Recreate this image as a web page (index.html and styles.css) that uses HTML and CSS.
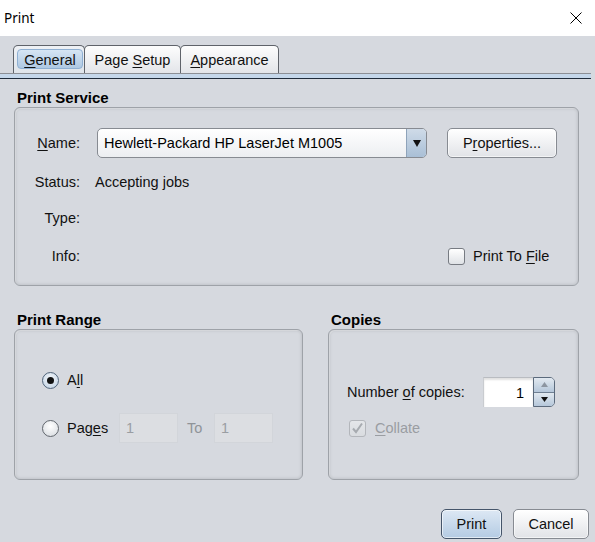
FILE: index.html
```html
<!DOCTYPE html>
<html>
<head>
<meta charset="utf-8">
<title>Print</title>
<link rel="stylesheet" href="styles.css">
</head>
<body>
<header class="titlebar">
  <span class="title">Print</span>
  <svg class="close" width="12" height="12" viewBox="0 0 12 12"><path d="M0.5 0.5L11.5 11.5M11.5 0.5L0.5 11.5" stroke="#000" stroke-width="1" fill="none"/></svg>
</header>
<main class="content">
  <nav class="tabs">
    <div class="tab tab-general selected"><span class="tab-inner"><span><u>G</u>eneral</span></span></div>
    <div class="tab tab-setup"><span>Page <u>S</u>etup</span></div>
    <div class="tab tab-appearance"><span><u>A</u>ppearance</span></div>
  </nav>
  <div class="tabline"></div>

  <section class="group service">
    <h2 class="group-title">Print Service</h2>
    <div class="panel service-panel">
      <div class="row row-name">
        <span class="label"><u>N</u>ame:</span>
        <div class="combo">
          <span class="combo-text">Hewlett-Packard HP LaserJet M1005</span>
          <span class="combo-arrow"><svg width="8" height="7" viewBox="0 0 8 7"><path d="M0 0H8L4 7Z" fill="#111"/></svg></span>
        </div>
        <div class="btn props"><span>P<u>r</u>operties...</span></div>
      </div>
      <div class="row row-status">
        <span class="label">Status:</span>
        <span class="value">Accepting jobs</span>
      </div>
      <div class="row row-type">
        <span class="label">Type:</span>
      </div>
      <div class="row row-info">
        <span class="label">Info:</span>
        <label class="check-group tofile"><span class="checkbox"></span><span>Print To <u>F</u>ile</span></label>
      </div>
    </div>
  </section>

  <div class="row2">
    <section class="group range">
      <h2 class="group-title">Print Range</h2>
      <div class="panel range-panel">
        <div class="radio-row row-all">
          <span class="radio checked"></span><span class="radio-label">A<u>l</u>l</span>
        </div>
        <div class="radio-row row-pages">
          <span class="radio"></span><span class="radio-label pages-label">Pag<u>e</u>s</span>
          <span class="field disabled">1</span>
          <span class="to">To</span>
          <span class="field disabled">1</span>
        </div>
      </div>
    </section>
    <section class="group copies">
      <h2 class="group-title">Copies</h2>
      <div class="panel copies-panel">
        <div class="copies-row">
          <span class="copies-label">Number <u>o</u>f copies:</span>
          <div class="spinner">
            <span class="spin-field">1</span>
            <span class="spin-buttons">
              <span class="spin-btn up"><svg width="7" height="5" viewBox="0 0 7 5"><path d="M0 5H7L3.5 0Z" fill="#8d96a1"/></svg></span>
              <span class="spin-btn down"><svg width="7" height="5" viewBox="0 0 7 5"><path d="M0 0H7L3.5 5Z" fill="#111"/></svg></span>
            </span>
          </div>
        </div>
        <label class="check-group collate">
          <span class="checkbox disabled"><svg width="15" height="15" viewBox="0 0 15 15"><path d="M3 7.5L6 11L12 2.5" stroke="#a7abb0" stroke-width="2" fill="none"/></svg></span>
          <span class="disabled-text"><u>C</u>ollate</span>
        </label>
      </div>
    </section>
  </div>

  <div class="buttons">
    <div class="btn default"><span>Print</span></div>
    <div class="btn cancel"><span>Cancel</span></div>
  </div>
</main>
</body>
</html>
```

FILE: styles.css
```css
* { box-sizing: border-box; margin: 0; padding: 0; }

body {
  width: 595px;
  height: 542px;
  overflow: hidden;
  background: #d6d9df;
  font-family: "Liberation Sans", Arial, sans-serif;
  font-size: 14.5px;
  color: #111;
}

u { text-underline-offset: 2px; }

.titlebar {
  height: 36px;
  background: #fff;
  display: flex;
  align-items: center;
  justify-content: space-between;
  padding: 0 13px 0 4px;
}
.title {
  font-family: "Noto Sans", "Open Sans", sans-serif;
  font-size: 13.5px;
  color: #000;
}
.close { display: block; margin-top: -1px; }

.content { padding-top: 9px; }

.tabs {
  display: flex;
  padding-left: 13px;
  height: 28px;
}
.tab {
  height: 28px;
  border: 1px solid #5f636a;
  border-bottom: none;
  border-radius: 5px 5px 0 0;
  background: linear-gradient(#fdfdfd, #e3e5e9);
  display: flex;
  align-items: center;
  justify-content: center;
  line-height: 16px;
  white-space: nowrap;
  padding-top: 1px;
}
.tab + .tab { margin-left: -1px; }
.tab-general { width: 72px; }
.tab-setup { width: 97px; }
.tab-appearance { width: 99px; }
.tab.selected {
  padding: 3px 1px 4px 3px;
  background: linear-gradient(#eef1f5, #dfe4ea);
}
.tab-inner {
  width: 100%;
  height: 100%;
  display: flex;
  align-items: center;
  justify-content: center;
  padding-top: 1px;
  border: 1px solid #8fb0d3;
  border-radius: 4px;
  background: linear-gradient(#d6e5f4, #aec8e2);
}

.tabline {
  width: 591px;
  height: 6px;
  border-top: 1px solid #8c8f95;
  border-bottom: 1px solid #1f2b3b;
  background: #c5d7ea;
}

.group { padding-left: 14px; }
.group-title {
  font-size: 15px;
  font-weight: bold;
  line-height: 18px;
  margin-left: 3px;
  color: #000;
}
.service { margin-top: 10px; }

.panel {
  border: 1px solid #9ea2a8;
  border-radius: 6px;
  background: #d6d9df;
  box-shadow: inset 0 0 3px 1px rgba(0, 0, 0, 0.10), inset 1px 1px 0 rgba(255, 255, 255, 0.35);
}

.service-panel {
  width: 565px;
  height: 179px;
  padding-top: 20px;
}
.row { display: flex; align-items: center; }
.label { width: 65px; flex: none; text-align: right; }
.row-name { height: 30px; }
.row-status { height: 20px; margin-top: 14px; }
.row-type { height: 20px; margin-top: 16px; }
.row-info { height: 20px; margin-top: 18px; }
.value { margin-left: 15px; }

.combo {
  margin-left: 17px;
  width: 330px;
  height: 30px;
  display: flex;
  border: 1px solid #878b92;
  border-radius: 5px;
  background: linear-gradient(#ffffff, #eceef1);
  overflow: hidden;
}
.combo-text {
  flex: 1;
  display: flex;
  align-items: center;
  padding-left: 6px;
  color: #000;
}
.combo-arrow {
  width: 20px;
  display: flex;
  align-items: center;
  justify-content: center;
  border-left: 1px solid #8ea3ba;
  background: linear-gradient(#cfdbe8, #a9bfd6);
}

.btn {
  display: flex;
  align-items: center;
  justify-content: center;
  height: 30px;
  border: 1px solid #878b92;
  border-radius: 5px;
  background: linear-gradient(#ffffff, #e1e3e7);
  color: #111;
  box-shadow: inset 0 0 0 1px rgba(255, 255, 255, 0.6);
}
.props { margin-left: 20px; width: 110px; }

.check-group { display: flex; align-items: center; }
.tofile { margin-left: 368px; }
.checkbox {
  width: 17px;
  height: 17px;
  flex: none;
  border: 1px solid #777b82;
  border-radius: 3px;
  background: linear-gradient(#ffffff, #dfe2e6);
  margin-right: 8px;
  display: flex;
  align-items: center;
  justify-content: center;
}
.checkbox.disabled {
  border-color: #b3b6bb;
  background: linear-gradient(#e4e6e9, #d9dce0);
}

.row2 {
  display: flex;
  margin-top: 25px;
}
.copies { padding-left: 25px; }

.range-panel {
  width: 289px;
  height: 151px;
  padding: 35px 0 0 27px;
}
.radio-row { display: flex; align-items: center; height: 30px; }
.row-pages { margin-top: 18px; }
.radio {
  width: 17px;
  height: 17px;
  flex: none;
  border: 1px solid #62676e;
  border-radius: 50%;
  background: radial-gradient(circle at 50% 35%, #ffffff, #d5d9de);
  display: flex;
  align-items: center;
  justify-content: center;
}
.radio.checked {
  border-color: #51647a;
  background: radial-gradient(circle at 50% 35%, #f2f6fa, #bfd0e2);
}
.radio.checked::after {
  content: "";
  width: 7px;
  height: 7px;
  border-radius: 50%;
  background: #111;
}
.radio-label { margin-left: 8px; }
.pages-label { width: 52px; flex: none; }

.field {
  height: 30px;
  width: 59px;
  flex: none;
  display: flex;
  align-items: center;
  padding-left: 6px;
}
.field.disabled {
  background: #dcdee2;
  border: 1px solid #d2d5da;
  color: #9a9da2;
}
.to { width: 36px; flex: none; padding-left: 9px; color: #8f9398; }

.copies-panel {
  width: 251px;
  height: 151px;
  padding: 47px 0 0 18px;
}
.copies-row { display: flex; align-items: center; height: 30px; }
.copies-label { width: 136px; flex: none; white-space: nowrap; }
.spinner { display: flex; height: 30px; }
.spin-field {
  width: 50px;
  height: 30px;
  background: #fff;
  border-top: 1px solid #b9bcc1;
  border-left: 1px solid #c9ccd0;
  box-shadow: inset 0 2px 2px rgba(0, 0, 0, 0.12);
  display: flex;
  align-items: center;
  justify-content: flex-end;
  padding-right: 9px;
  color: #000;
}
.spin-buttons {
  width: 22px;
  display: flex;
  flex-direction: column;
  border: 1px solid #5b6a7c;
  border-radius: 0 5px 5px 0;
  overflow: hidden;
}
.spin-btn {
  flex: 1;
  display: flex;
  align-items: center;
  justify-content: center;
  background: linear-gradient(#e2e9f0, #b5c7da);
}
.spin-btn.down { border-top: 1px solid #6f7f92; }

.collate { margin-top: 11px; height: 20px; margin-left: 2px; }
.collate .checkbox { margin-right: 9px; }
.disabled-text { color: #9a9da2; }

.buttons {
  display: flex;
  justify-content: flex-end;
  gap: 11px;
  margin-top: 29px;
  padding-right: 6px;
}
.btn.default {
  width: 61px;
  border-color: #45556a;
  background: linear-gradient(#dde8f4, #b4cbe3);
}
.btn.cancel { width: 76px; }
```
